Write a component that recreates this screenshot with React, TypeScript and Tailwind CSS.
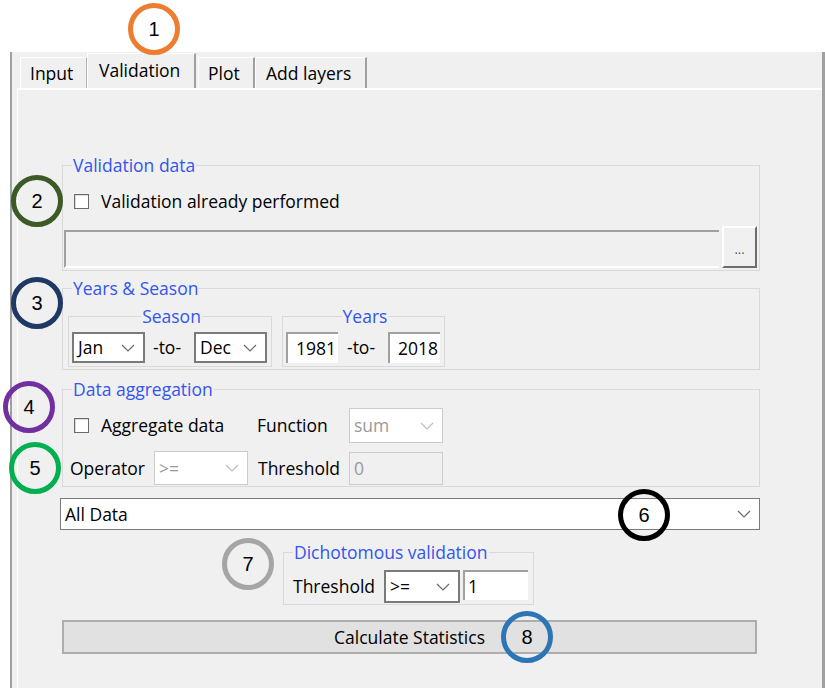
import React from "react"

const font = { fontFamily: '"Open Sans", "Noto Sans", sans-serif' }

function Chevron({ color = "#6b6b6b" }: { color?: string }) {
  return (
    <svg width="14" height="8" viewBox="0 0 14 8" fill="none">
      <path d="M1 1l6 6 6-6" stroke={color} strokeWidth="1.2" />
    </svg>
  )
}

function Select({ value, w, h, disabled = false, className = "" }: { value: string; w: string; h: string; disabled?: boolean; className?: string }) {
  return (
    <div
      className={`${w} ${h} flex items-center justify-between bg-white pl-[4px] pr-[8px] ${
        disabled ? "border border-[#cccccc] text-[#9a9a9a]" : "border-2 border-[#7a7a7a] text-black"
      } ${className}`}
    >
      <span>{value}</span>
      <Chevron color={disabled ? "#bdbdbd" : "#6b6b6b"} />
    </div>
  )
}

function Checkbox() {
  return <div className="w-[15px] h-[15px] border border-[#6a6a6a] bg-white shadow-[inset_1px_1px_0_#dcdcdc]" />
}

function Legend({ children, center = false }: { children: React.ReactNode; center?: boolean }) {
  return (
    <legend className={`text-[#3355ee] leading-[22px] px-[1px] ${center ? "mx-auto" : "ml-[9px]"}`}>{children}</legend>
  )
}

const circles = [
  { n: "1", x: 128, y: 3, c: "border-[#ed7d31]" },
  { n: "2", x: 11, y: 175, c: "border-[#3b5a26]" },
  { n: "3", x: 11, y: 277, c: "border-[#1f3864]" },
  { n: "4", x: 3, y: 381, c: "border-[#7030a0]" },
  { n: "5", x: 9, y: 442, c: "border-[#00b050]" },
  { n: "6", x: 618, y: 489, c: "border-[#000000]" },
  { n: "7", x: 222, y: 538, c: "border-[#a5a5a5]" },
  { n: "8", x: 501, y: 611, c: "border-[#2e75b6]" },
]

export default function App() {
  return (
    <div className="relative w-[825px] h-[688px] bg-white pt-[52px] overflow-hidden text-[17.5px] text-black" style={font}>
      <div className="ml-[10px] w-[815px] h-[636px] bg-[#f0f0f0] border-l-2 border-r-[3px] border-[#a0a0a0] flex flex-col">
        {/* tabs */}
        <div className="h-[36px] flex items-end pl-[8px]">
          <div className="w-[67px] h-[31px] border-l border-t border-white border-r border-r-[#b0b0b0] flex items-center pl-[9px]">Input</div>
          <div className="w-[109px] h-[35px] border-l border-t border-white border-r-2 border-r-[#a0a0a0] flex items-start pt-[3px] pl-[11px] bg-[#f0f0f0]">Validation</div>
          <div className="ml-[2px] w-[57px] h-[31px] border-l border-t border-white border-r-2 border-r-[#a0a0a0] flex items-center pl-[9px]">Plot</div>
          <div className="w-[112px] h-[31px] border-l border-t border-white border-r-2 border-r-[#a0a0a0] flex items-center pl-[10px]">Add layers</div>
        </div>
        {/* pane */}
        <div className="flex-1 border-t-2 border-white ml-[5px] border-l border-l-white pl-[44px]">
          {/* Validation data */}
          <fieldset className="mt-[64px] w-[698px] min-w-0 border border-[#d9d9d9] pb-[2px]">
            <Legend>Validation data</Legend>
            <div className="mt-[14px] h-[22px] flex items-center gap-[12px] pl-[11px]">
              <Checkbox />
              <span>Validation already performed</span>
            </div>
            <div className="mt-[14px] flex items-end pl-[1px]">
              <div className="w-[655px] h-[38px] border-t-2 border-l-2 border-[#a0a0a0] border-b-2 border-b-white bg-[#f0f0f0]" />
              <div className="ml-[3px] w-[35px] h-[42px] border-l-2 border-t-2 border-white border-r-2 border-b-2 border-r-[#6d6d6d] border-b-[#6d6d6d] flex items-center justify-center text-[13px] text-[#555] pt-[6px]">
                ...
              </div>
            </div>
          </fieldset>

          {/* Years & Season */}
          <fieldset className="mt-[6px] w-[698px] min-w-0 border border-[#d9d9d9] pb-[2px]">
            <Legend>Years &amp; Season</Legend>
            <div className="flex gap-[10px] mt-[6px] pl-[5px]">
              <fieldset className="w-[204px] min-w-0 border border-[#d9d9d9] pl-[3px] pb-[3px]">
                <Legend center>Season</Legend>
                <div className="mt-[5px] flex items-center">
                  <Select value="Jan" w="w-[73px]" h="h-[31px]" />
                  <span className="ml-[8px] w-[34px]">-to-</span>
                  <Select value="Dec" w="w-[73px]" h="h-[31px]" className="ml-[7px]" />
                </div>
              </fieldset>
              <fieldset className="w-[163px] min-w-0 border border-[#d9d9d9] pl-[3px] pb-[3px]">
                <Legend center>Years</Legend>
                <div className="mt-[5px] flex items-center">
                  <div className="w-[52px] h-[31px] bg-white border-t-2 border-l-2 border-[#a0a0a0] text-right pr-[2px] leading-[29px]">1981</div>
                  <span className="ml-[9px] w-[33px]">-to-</span>
                  <div className="ml-[8px] w-[52px] h-[31px] bg-white border-t-2 border-l-2 border-[#a0a0a0] text-right pr-[2px] leading-[29px]">2018</div>
                </div>
              </fieldset>
            </div>
          </fieldset>

          {/* Data aggregation */}
          <fieldset className="mt-[8px] w-[698px] min-w-0 border border-[#d9d9d9] pb-[1px]">
            <Legend>Data aggregation</Legend>
            <div className="mt-[8px] flex items-center pl-[11px]">
              <div className="w-[183px] flex items-center gap-[12px]">
                <Checkbox />
                <span>Aggregate data</span>
              </div>
              <span className="w-[92px]">Function</span>
              <Select value="sum" w="w-[94px]" h="h-[35px]" disabled />
            </div>
            <div className="mt-[8px] flex items-center pl-[7px]">
              <span className="w-[84px]">Operator</span>
              <Select value=">=" w="w-[94px]" h="h-[34px]" disabled />
              <span className="ml-[10px] w-[91px]">Threshold</span>
              <div className="w-[94px] h-[33px] bg-[#f0f0f0] border border-[#cccccc] text-[#9a9a9a] pl-[4px] leading-[31px]">0</div>
            </div>
          </fieldset>

          {/* All Data */}
          <div className="mt-[11px] -ml-[2px] w-[700px] h-[32px] bg-white border border-[#7a7a7a] flex items-center justify-between pl-[4px] pr-[8px]">
            <span>All Data</span>
            <Chevron />
          </div>

          {/* Dichotomous validation */}
          <fieldset className="mt-[11px] ml-[221px] w-[251px] min-w-0 border border-[#d9d9d9] pb-[1px]">
            <Legend>Dichotomous validation</Legend>
            <div className="mt-[7px] flex items-center pl-[9px]">
              <span className="w-[91px]">Threshold</span>
              <Select value=">=" w="w-[76px]" h="h-[33px]" />
              <div className="ml-[3px] w-[65px] h-[30px] self-start bg-white border-t-2 border-l-2 border-[#a0a0a0] pl-[3px] leading-[28px]">1</div>
            </div>
          </fieldset>

          {/* Button */}
          <div className="mt-[15px] w-[695px] h-[34px] bg-[#e1e1e1] border-2 border-[#adadad] flex items-center justify-center">
            <span>Calculate Statistics</span>
          </div>
        </div>
      </div>

      {circles.map((c) => (
        <div
          key={c.n}
          className={`absolute w-[52px] h-[52px] rounded-full border-[5px] ${c.c} flex items-center justify-center text-[20px] text-black`}
          style={{ left: c.x, top: c.y, fontFamily: '"Liberation Sans", sans-serif' }}
        >
          {c.n}
        </div>
      ))}
    </div>
  )
}
